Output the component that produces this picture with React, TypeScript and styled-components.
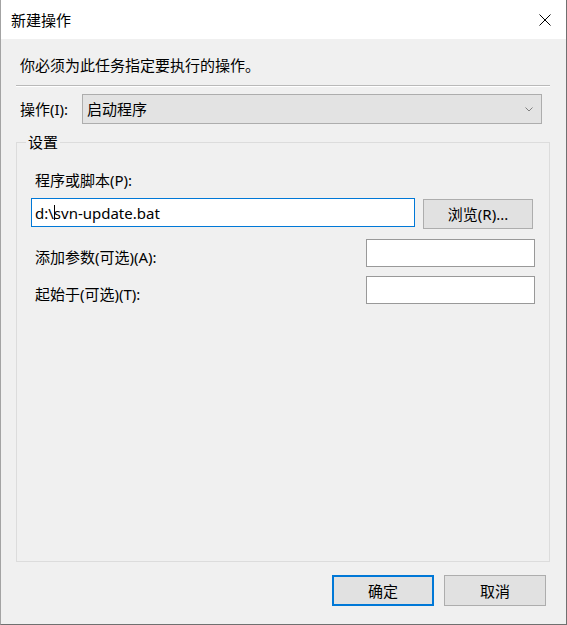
import styled, { createGlobalStyle } from 'styled-components'

const GlobalStyle = createGlobalStyle`
  html, body {
    margin: 0;
    padding: 0;
    background: #f0f0f0;
  }
  * {
    box-sizing: border-box;
  }
`

const Window = styled.div`
  width: 567px;
  height: 625px;
  display: flex;
  flex-direction: column;
  background: #f0f0f0;
  border-left: 1px solid #a3a3a3;
  border-right: 1px solid #707070;
  border-bottom: 1px solid #707070;
  font-family: "Noto Sans", "Noto Sans CJK SC", sans-serif;
  font-size: 15px;
  line-height: 20px;
  color: #000;
`

const TitleBar = styled.div`
  flex: none;
  height: 39px;
  background: #fff;
  display: flex;
  align-items: center;
  justify-content: space-between;
  padding-left: 10px;
`

const CloseButton = styled.div`
  width: 42px;
  height: 39px;
  display: flex;
  align-items: center;
  justify-content: center;
`

const Body = styled.div`
  flex: 1;
  display: flex;
  flex-direction: column;
  padding: 16px 16px 18px 15px;
`

const Instruction = styled.div`
  margin-left: 4px;
`

const Separator = styled.div`
  margin-top: 10px;
  height: 2px;
  border-top: 1px solid #b9b9b9;
  border-bottom: 1px solid #fff;
`

const ActionRow = styled.div`
  margin-top: 7px;
  display: flex;
  align-items: center;
  padding: 0 8px 0 4px;
`

const ActionLabel = styled.span`
  width: 62px;
  flex: none;
`

const ComboBox = styled.div`
  flex: 1;
  height: 30px;
  display: flex;
  align-items: center;
  justify-content: space-between;
  padding: 0 8px 0 4px;
  background: #e3e3e3;
  border: 1px solid #adadad;
`

const Group = styled.fieldset`
  flex: 1;
  margin: 8px 0 0 0;
  padding: 18px 14px 0 14px;
  border: 1px solid #dcdcdc;
  min-width: 0;
`

const Legend = styled.legend`
  margin-left: -5px;
  padding: 0 2px;
  line-height: 20px;
`

const FieldLabel = styled.div<{ $drop?: number }>`
  margin-left: 4px;
  padding-top: ${(p) => p.$drop ?? 0}px;
`

const PathRow = styled.div`
  margin-top: 8px;
  display: flex;
  align-items: flex-start;
  gap: 8px;
`

const TextBox = styled.div<{ $width: number; $height: number; $focused?: boolean }>`
  flex: none;
  width: ${(p) => p.$width}px;
  height: ${(p) => p.$height}px;
  background: #fff;
  border: 1px solid ${(p) => (p.$focused ? '#0078d7' : '#999999')};
  padding: 0 3px;
  display: flex;
  align-items: center;
  white-space: pre;
`

const Caret = styled.span`
  display: inline-block;
  width: 1px;
  height: 15px;
  background: #000;
  margin: 0 -1px 0 0;
`

const OptionRow = styled.div<{ $gap: number }>`
  margin-top: ${(p) => p.$gap}px;
  display: flex;
  align-items: center;
  justify-content: space-between;
`

const Button = styled.div<{ $width: number; $default?: boolean }>`
  flex: none;
  width: ${(p) => p.$width}px;
  height: 30px;
  display: flex;
  align-items: center;
  justify-content: center;
  background: #e1e1e1;
  border: ${(p) => (p.$default ? '2px solid #0078d7' : '1px solid #adadad')};
`

const BrowseButton = styled(Button)`
  margin-top: 1px;
`

const Footer = styled.div`
  margin-top: 13px;
  display: flex;
  justify-content: flex-end;
  gap: 10px;
  padding-right: 4px;
`

const FooterButton = styled(Button)`
  height: 31px;
`

const App = () => {
  return (
    <>
      <GlobalStyle />
      <Window>
        <TitleBar>
          <span>新建操作</span>
          <CloseButton>
            <svg width="12" height="12" viewBox="0 0 12 12">
              <path d="M0.5 0.5 L11.5 11.5 M11.5 0.5 L0.5 11.5" stroke="#000" strokeWidth="1" />
            </svg>
          </CloseButton>
        </TitleBar>
        <Body>
          <Instruction>你必须为此任务指定要执行的操作。</Instruction>
          <Separator />
          <ActionRow>
            <ActionLabel>操作(I):</ActionLabel>
            <ComboBox>
              <span>启动程序</span>
              <svg width="8" height="5" viewBox="0 0 8 5">
                <polyline points="0.5,0.5 4,4 7.5,0.5" fill="none" stroke="#808080" strokeWidth="1" />
              </svg>
            </ComboBox>
          </ActionRow>
          <Group>
            <Legend>设置</Legend>
            <FieldLabel>程序或脚本(P):</FieldLabel>
            <PathRow>
              <TextBox $width={384} $height={29} $focused>
                {'d:\\'}
                <Caret />
                {'svn-update.bat'}
              </TextBox>
              <BrowseButton $width={110}>浏览(R)...</BrowseButton>
            </PathRow>
            <OptionRow $gap={10}>
              <FieldLabel $drop={7}>添加参数(可选)(A):</FieldLabel>
              <TextBox $width={169} $height={28} />
            </OptionRow>
            <OptionRow $gap={9}>
              <FieldLabel $drop={7}>起始于(可选)(T):</FieldLabel>
              <TextBox $width={169} $height={28} />
            </OptionRow>
          </Group>
          <Footer>
            <FooterButton $width={102} $default>确定</FooterButton>
            <FooterButton $width={102}>取消</FooterButton>
          </Footer>
        </Body>
      </Window>
    </>
  )
}

export default App
